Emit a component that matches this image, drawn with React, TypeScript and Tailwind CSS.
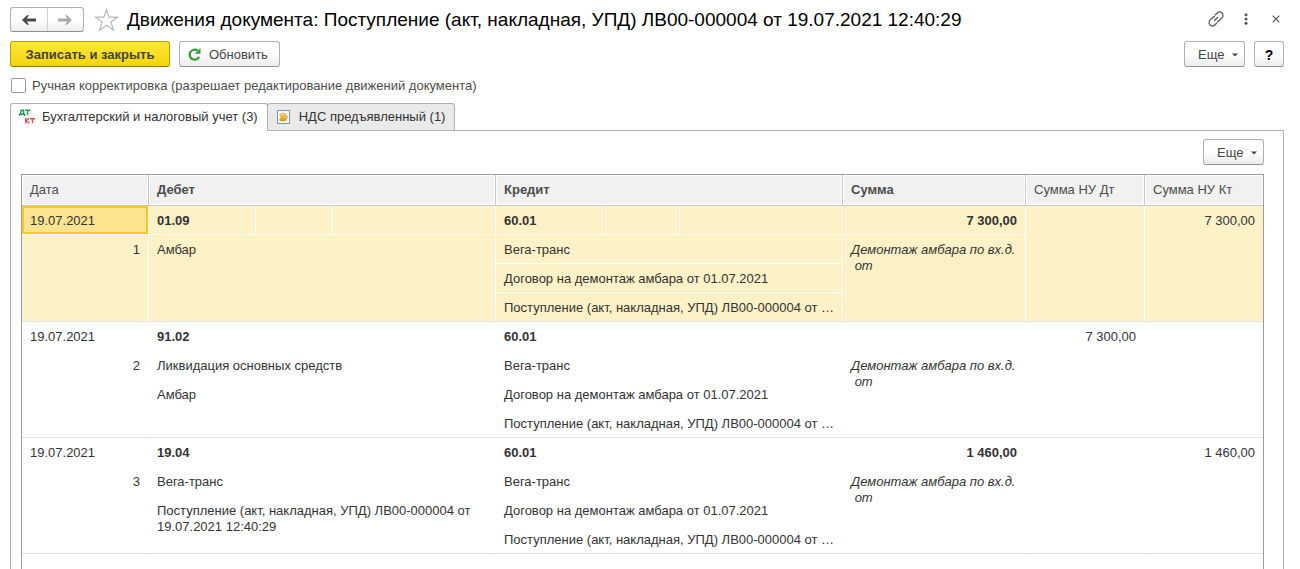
import React from "react";

type Entry = {
  date: string;
  no: number;
  debit: string;
  debitLines: string[];
  credit: string;
  sum: string;
  taxDebit: string;
  taxCredit: string;
  selected?: boolean;
};

const creditLines = [
  "Вега-транс",
  "Договор на демонтаж амбара от 01.07.2021",
  "Поступление (акт, накладная, УПД) ЛВ00-000004 от …",
];

const entries: Entry[] = [
  {
    date: "19.07.2021",
    no: 1,
    debit: "01.09",
    debitLines: ["Амбар"],
    credit: "60.01",
    sum: "7 300,00",
    taxDebit: "",
    taxCredit: "7 300,00",
    selected: true,
  },
  {
    date: "19.07.2021",
    no: 2,
    debit: "91.02",
    debitLines: ["Ликвидация основных средств", "Амбар"],
    credit: "60.01",
    sum: "",
    taxDebit: "7 300,00",
    taxCredit: "",
  },
  {
    date: "19.07.2021",
    no: 3,
    debit: "19.04",
    debitLines: ["Вега-транс", "Поступление (акт, накладная, УПД) ЛВ00-000004 от 19.07.2021 12:40:29"],
    credit: "60.01",
    sum: "1 460,00",
    taxDebit: "",
    taxCredit: "1 460,00",
  },
];

const buttonFace =
  "flex h-[26px] items-center rounded-[3px] border border-[#b0b0b0] border-b-[#8f8f8f] bg-linear-to-b from-white from-50% to-[#ececec] pt-px text-[#444444]";

function MoreButton() {
  return (
    <button type="button" className={`${buttonFace} w-[61px] gap-2 pl-[13px]`}>
      Еще
      <svg width="6" height="4" viewBox="0 0 6 4" className="mt-px shrink-0" aria-hidden="true">
        <path d="M0 0.500h6L3 3.500z" fill="#444444" />
      </svg>
    </button>
  );
}

function EntryRows({ entry }: { entry: Entry }) {
  const bg = entry.selected ? "bg-[#fdf1c7]" : "";
  const cell = `border-r border-b border-white px-2 align-top ${bg}`;
  const end = "border-b-[#e4e4e4]";
  const last = entry.debitLines.length - 1;
  const bold = `${cell} pt-[7px] font-bold`;
  return (
    <tbody>
      <tr className="h-[29px]">
        {entry.selected ? (
          <td className="border-r border-b border-white bg-[#ffe48f] px-2 pt-[7px] align-top inset-ring-2 inset-ring-[#f9c822]">
            {entry.date}
          </td>
        ) : (
          <td className={`${cell} pt-[7px]`}>{entry.date}</td>
        )}
        <td className={bold}>{entry.debit}</td>
        <td className={cell} />
        <td className={cell} />
        <td className={bold}>{entry.credit}</td>
        <td className={cell} />
        <td className={cell} />
        <td className={`${bold} text-right`}>{entry.sum}</td>
        <td rowSpan={4} className={`${cell} ${end} pt-[7px] text-right`}>
          {entry.taxDebit}
        </td>
        <td rowSpan={4} className={`border-b border-[#e4e4e4] px-2 pt-[7px] text-right align-top ${bg}`}>
          {entry.taxCredit}
        </td>
      </tr>
      {creditLines.map((line, i) => (
        <tr key={line} className="h-[29px]">
          {i === 0 && (
            <td rowSpan={3} className={`${cell} ${end} pt-[7px] text-right`}>
              {entry.no}
            </td>
          )}
          {i <= last && (
            <td
              colSpan={3}
              rowSpan={i === last ? 3 - last : 1}
              className={`${cell} ${i === last ? end : ""} pt-[7px]`}
            >
              {entry.debitLines[i]}
            </td>
          )}
          <td colSpan={3} className={`${cell} ${i === 2 ? end : ""} pt-[7px] whitespace-nowrap`}>
            {line}
          </td>
          {i === 0 && (
            <td rowSpan={3} className={`${cell} ${end} pt-[7px] whitespace-pre-line italic`}>
              Демонтаж амбара по вх.д.{"\n\u00a0"}от
            </td>
          )}
        </tr>
      ))}
    </tbody>
  );
}

function HeadCell({ children, span, strong }: { children: string; span?: number; strong?: boolean }) {
  return (
    <th
      scope="col"
      colSpan={span}
      className={`border-r border-b border-[#c8c8c8] bg-[#f1f1f1] px-2 text-left text-[#4d4d4d] inset-ring inset-ring-white last:border-r-0 ${
        strong ? "font-bold" : "font-normal"
      }`}
    >
      {children}
    </th>
  );
}

export default function App() {
  return (
    <div className="flex min-h-screen flex-col bg-white pr-4 pl-[10px] font-['Liberation_Sans',Arial,sans-serif] text-[13px] leading-4 text-[#333333]">
      <header className="flex items-center pt-[7px]">
        <div className="flex h-[25px] w-[74px] rounded-[3px] border border-[#b0b0b0] border-b-[#8f8f8f] bg-linear-to-b from-white from-50% to-[#ececec]">
          <button type="button" aria-label="Назад" className="flex flex-1 items-center justify-center border-r border-[#cfcfcf]">
            <svg width="14" height="10" viewBox="0 0 14 10" aria-hidden="true">
              <path d="M0 5L5 0.300H7L4.800 3.600H14V6.400H4.800L7 9.700H5z" fill="#4a4a4a" />
            </svg>
          </button>
          <button type="button" aria-label="Вперед" className="flex flex-1 items-center justify-center">
            <svg width="14" height="10" viewBox="0 0 14 10" aria-hidden="true">
              <path d="M14 5L9 0.300H7L9.200 3.600H0V6.400H9.200L7 9.700H9z" fill="#aaaaaa" />
            </svg>
          </button>
        </div>
        <button type="button" aria-label="Добавить в избранное" className="ml-[10px]">
          <svg width="25" height="24" viewBox="0 0 25 24" aria-hidden="true">
            <path
              d="M12.500 1.500l2.700 7.700h8.300l-6.600 4.900 2.500 7.900-6.900-4.800-6.900 4.800 2.500-7.900L1.500 9.200h8.300z"
              fill="none"
              stroke="#b4b9c1"
              strokeWidth="1.200"
            />
          </svg>
        </button>
        <h1 className="ml-2 flex-1 pt-px text-[19px] leading-6 whitespace-nowrap text-black">
          Движения документа: Поступление (акт, накладная, УПД) ЛВ00-000004 от 19.07.2021 12:40:29
        </h1>
        <div className="flex items-center pb-[2px]">
          <button type="button" aria-label="Ссылка">
            <svg
              width="16"
              height="16"
              viewBox="0 0 16 16"
              fill="none"
              stroke="#555555"
              strokeWidth="1.200"
              strokeLinecap="round"
              aria-hidden="true"
            >
              <path d="M7.200 4L9.200 2a3.300 3.300 0 0 1 4.800 4.800L11.200 9.500a3 3 0 0 1-1.600.8" />
              <path d="M8.800 12L6.800 14A3.300 3.300 0 0 1 2 9.200L4.800 6.500a3 3 0 0 1 1.600-.8" />
              <path d="M6.500 9.500L9.500 6.500" />
            </svg>
          </button>
          <button type="button" aria-label="Меню" className="ml-5">
            <svg width="4" height="12" viewBox="0 0 4 12" fill="#555555" aria-hidden="true">
              <circle cx="2" cy="1.800" r="1.500" />
              <circle cx="2" cy="6" r="1.500" />
              <circle cx="2" cy="10.200" r="1.500" />
            </svg>
          </button>
          <button type="button" aria-label="Закрыть" className="mr-1 ml-6">
            <svg width="8" height="8" viewBox="0 0 8 8" stroke="#555555" strokeWidth="1.200" aria-hidden="true">
              <path d="M0.700 0.700l6.600 6.600M7.300 0.700L0.700 7.300" />
            </svg>
          </button>
        </div>
      </header>

      <div className="mt-[9px] flex items-center">
        <button
          type="button"
          className="flex h-[26px] w-40 items-center justify-center rounded-[3px] border border-[#b59f00] border-b-[#8f7d00] bg-linear-to-b from-[#ffe735] to-[#f2d500] pt-px font-bold text-[#444444]"
        >
          Записать и закрыть
        </button>
        <button type="button" className={`${buttonFace} ml-[9px] w-[101px] gap-2 pl-2`}>
          <svg width="13" height="13" viewBox="0 0 13 13" className="mb-px" aria-hidden="true">
            <path d="M11.200 8.800A5 5 0 1 1 9.700 2.700" fill="none" stroke="#2f9e3b" strokeWidth="2.200" />
            <path d="M12.500 0V5.800H6.800z" fill="#2f9e3b" />
          </svg>
          Обновить
        </button>
        <div className="ml-auto flex gap-[9px]">
          <MoreButton />
          <button type="button" className={`${buttonFace} w-[30px] justify-center text-[14px] font-bold text-black`}>
            ?
          </button>
        </div>
      </div>

      <label className="mt-[10px] flex items-center gap-[6px] self-start text-[#4d4d4d]">
        <input
          type="checkbox"
          className="ml-px size-[15px] appearance-none rounded-[2px] border border-[#999999] bg-white"
        />
        <span className="pt-px">Ручная корректировка (разрешает редактирование движений документа)</span>
      </label>

      <div role="tablist" className="mt-[9px] flex h-[27px]">
        <button
          type="button"
          role="tab"
          aria-selected="true"
          className="z-10 -mb-px flex items-center gap-[7px] rounded-t-[3px] border border-b-0 border-[#b0b0b0] bg-white pr-[9px] pb-[2px] pl-2"
        >
          <svg width="16" height="16" viewBox="0 0 16 16" fill="none" strokeWidth="1.400" aria-hidden="true">
            <path d="M0.600 7V5.200H5.500V7M1.400 5.200L2.300 1.200H4.500V5.200M6 1.200h5.200M8.600 1.200v5" stroke="#159957" />
            <path d="M6.700 9v5.200M10.200 9L7.200 11.500l3.200 2.700M11 9.700h5M13.500 9.700v4.500" stroke="#e04f4f" />
          </svg>
          Бухгалтерский и налоговый учет (3)
        </button>
        <button
          type="button"
          role="tab"
          aria-selected="false"
          className="-ml-px flex items-center gap-2 rounded-t-[3px] border border-b-0 border-[#b0b0b0] bg-[#eaeaea] pr-[9px] pl-[9px]"
        >
          <svg width="14" height="14" viewBox="0 0 14 14" aria-hidden="true">
            <rect x="0.500" y="0.500" width="12" height="13" fill="#f4f8fc" stroke="#7d95b0" />
            <ellipse cx="6" cy="9.500" rx="3.400" ry="1.600" fill="#e9a91c" stroke="#b87a10" strokeWidth="0.500" />
            <ellipse cx="7.200" cy="7.200" rx="3.400" ry="1.600" fill="#f4c63c" stroke="#b87a10" strokeWidth="0.500" />
            <ellipse cx="6" cy="4.800" rx="3.200" ry="1.500" fill="#fbdc6a" stroke="#b87a10" strokeWidth="0.500" />
          </svg>
          НДС предъявленный (1)
        </button>
      </div>

      <main className="flex flex-1 flex-col border border-b-0 border-[#b0b0b0] pt-2 pr-[19px] pl-[10px]">
        <div className="flex justify-end">
          <MoreButton />
        </div>
        <div className="mt-[9px] flex-1 border border-b-0 border-[#9c9c9c]">
          <table className="w-full table-fixed border-separate border-spacing-0">
            <colgroup>
              <col className="w-[127px]" />
              <col className="w-[107px]" />
              <col className="w-[77px]" />
              <col className="w-[163px]" />
              <col className="w-[107px]" />
              <col className="w-[77px]" />
              <col className="w-[163px]" />
              <col className="w-[183px]" />
              <col className="w-[119px]" />
              <col className="w-[118px]" />
            </colgroup>
            <thead>
              <tr className="h-[31px]">
                <HeadCell>Дата</HeadCell>
                <HeadCell span={3} strong>
                  Дебет
                </HeadCell>
                <HeadCell span={3} strong>
                  Кредит
                </HeadCell>
                <HeadCell strong>Сумма</HeadCell>
                <HeadCell>Сумма НУ Дт</HeadCell>
                <HeadCell>Сумма НУ Кт</HeadCell>
              </tr>
            </thead>
            {entries.map((entry) => (
              <EntryRows key={entry.no} entry={entry} />
            ))}
          </table>
        </div>
      </main>
    </div>
  );
}
